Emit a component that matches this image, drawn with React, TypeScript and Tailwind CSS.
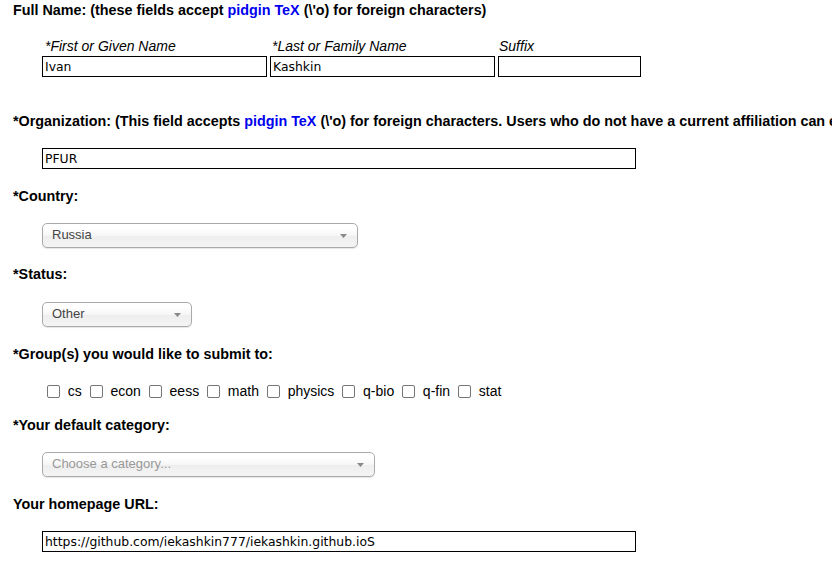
const groups = ["cs", "econ", "eess", "math", "physics", "q-bio", "q-fin", "stat"];

const Heading = ({ children, className = "" }: { children: React.ReactNode; className?: string }) => (
  <div className={"font-bold text-[14.35px] leading-4 whitespace-nowrap " + className}>{children}</div>
);

const TextBox = ({ value, className = "" }: { value: string; className?: string }) => (
  <div
    className={
      "h-[21px] border border-black bg-white pl-[2px] text-[12.4px] leading-[19px] font-['DejaVu_Sans',sans-serif] whitespace-nowrap overflow-hidden " +
      className
    }
  >
    {value}
  </div>
);

const Chosen = ({ value, placeholder, className = "" }: { value?: string; placeholder?: string; className?: string }) => (
  <div
    className={
      "h-[25px] flex items-center justify-between rounded-[5px] border border-[#aaaaaa] bg-[linear-gradient(#ffffff_20%,#f6f6f6_50%,#eeeeee_52%,#f4f4f4_100%)] shadow-[0_1px_1px_rgba(0,0,0,0.1)] pl-[9px] pr-[10px] text-[13px] " +
      className
    }
  >
    <span className={"-mt-[1px] " + (value ? "text-[#444444]" : "text-[#999999]")}>{value ?? placeholder}</span>
    <svg width="7" height="4" viewBox="0 0 7 4" className="mt-[1px]">
      <path d="M0 0h7L3.5 4z" fill="#888888" />
    </svg>
  </div>
);

const Pidgin = () => <span className="text-[#0000ee]">pidgin TeX</span>;

export default function App() {
  return (
    <div className="w-[832px] h-[566px] overflow-hidden bg-white text-black text-[14px] font-['Liberation_Sans',Arial,sans-serif] pt-[2px] pl-[13px]">
      <Heading>
        Full Name: (these fields accept <Pidgin /> (\'o) for foreign characters)
      </Heading>

      <div className="ml-[29px] mt-[20px] flex gap-[3px]">
        <div className="w-[225px]">
          <div className="italic leading-4 pl-[3px] mb-[2px]">*First or Given Name</div>
          <TextBox value="Ivan" />
        </div>
        <div className="w-[225px]">
          <div className="italic leading-4 pl-[2px] mb-[2px]">*Last or Family Name</div>
          <TextBox value="Kashkin" />
        </div>
        <div className="w-[143px]">
          <div className="italic leading-4 pl-[1px] mb-[2px]">Suffix</div>
          <TextBox value="" />
        </div>
      </div>

      <Heading className="mt-[36px]">
        *Organization: (This field accepts <Pidgin /> (\'o) for foreign characters. Users who do not have a current
        affiliation can enter "none".)
      </Heading>
      <TextBox value="PFUR" className="ml-[29px] mt-[19px] w-[594px]" />

      <Heading className="mt-[19px]">*Country:</Heading>
      <Chosen value="Russia" className="ml-[29px] mt-[19px] w-[316px]" />

      <Heading className="mt-[18px]">*Status:</Heading>
      <Chosen value="Other" className="ml-[29px] mt-[20px] w-[150px]" />

      <Heading className="mt-[19px]">*Group(s) you would like to submit to:</Heading>
      <div className="ml-[34px] mt-[21px] h-4 flex items-center gap-[7.85px] leading-4">
        {groups.map((g) => (
          <label key={g} className="flex items-center gap-[7.85px]">
            <span className="w-[13px] h-[13px] rounded-[2px] border-[1.5px] border-[#767676] bg-white" />
            <span>{g}</span>
          </label>
        ))}
      </div>

      <Heading className="mt-[18px]">*Your default category:</Heading>
      <Chosen placeholder="Choose a category..." className="ml-[29px] mt-[19px] w-[333px]" />

      <Heading className="mt-[19px]">Your homepage URL:</Heading>
      <TextBox value="https://github.com/iekashkin777/iekashkin.github.ioS" className="ml-[29px] mt-[19px] w-[594px]" />
    </div>
  );
}
